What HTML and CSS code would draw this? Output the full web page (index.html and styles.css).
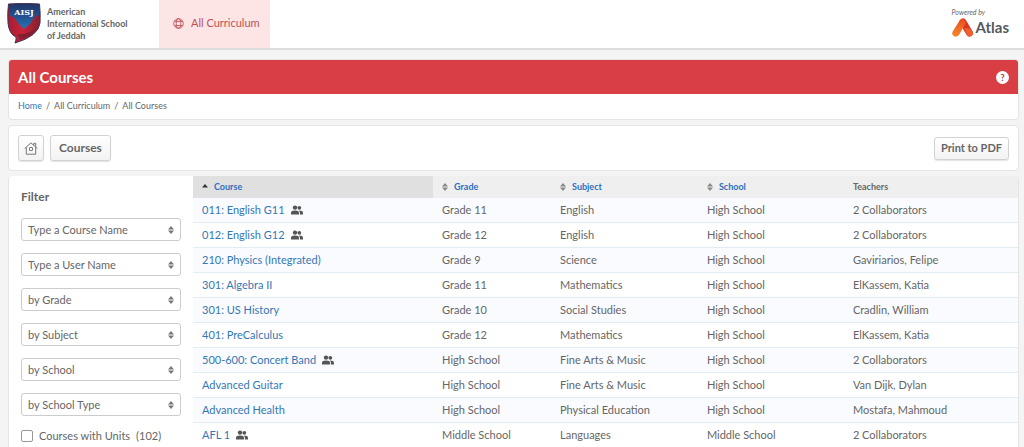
FILE: index.html
```html
<!DOCTYPE html>
<html lang="en">
<head>
<meta charset="utf-8">
<title>All Courses</title>
<meta name="viewport" content="width=device-width, initial-scale=1">
<link rel="stylesheet" href="styles.css">
</head>
<body>
<svg class="sprite" aria-hidden="true">
  <symbol id="people" viewBox="0 0 12 10">
    <circle cx="4" cy="2.6" r="2.2"/><path d="M0 9.600V8q0-2.400 4-2.400T8 8v1.600z"/>
    <circle cx="8.300" cy="2.800" r="1.900"/><path d="M8.900 9.600V8q0-1.300-1-2.400 4.100 0 4.100 2.400v1.600z"/>
  </symbol>
  <symbol id="sort" viewBox="0 0 6 8"><path d="M3 0l3 3.400H0zM3 8l3-3.400H0z"/></symbol>
</svg>
<header class="topbar">
  <div class="brand">
    <svg class="crest" viewBox="0 0 34 41" role="img" aria-label="AISJ">
      <defs>
        <linearGradient id="shield" x1="0" y1="0" x2="1" y2="0"><stop offset="0" stop-color="#a51e35"/><stop offset=".45" stop-color="#c82338"/><stop offset="1" stop-color="#85202f"/></linearGradient>
        <linearGradient id="field" x1="0" y1="0" x2="0" y2="1"><stop offset="0" stop-color="#203664"/><stop offset=".5" stop-color="#24518e"/><stop offset="1" stop-color="#2476b6"/></linearGradient>
      </defs>
      <path d="M1.500 1Q17-.5 32.500 1 33.500 10 33 20 31.500 33 8 40q1.500-3 1-6Q2 31 1 20 .3 10 1.500 1z" fill="url(#shield)" stroke="#3b315a"/>
      <path d="M2 1.500Q17 0 32 1.500v10.500Q26 14 24 20l-7 6-6-6Q8 14 2 12z" fill="url(#field)"/>
      <path d="M12 31q9 1 18-7-4 10-18 13 2-3-2-4z" fill="#851e31"/>
      <text class="crest-text" x="17" y="12" text-anchor="middle">AISJ</text>
    </svg>
    <div class="school">American<br>International School<br>of Jeddah</div>
  </div>
  <nav class="nav">
    <a class="nav-link" href="#">
      <svg class="globe" viewBox="0 0 12 12" aria-hidden="true"><circle cx="6" cy="6" r="5.200"/><ellipse cx="6" cy="6" rx="2.500" ry="5.200"/><path d="M1.500 3.700h9M1.500 8.300h9"/></svg>
      All Curriculum
    </a>
  </nav>
  <div class="powered">
    <span class="powered-label">Powered by</span>
    <span class="atlas">
      <svg class="atlas-mark" viewBox="0 0 22 19" aria-hidden="true">
        <defs><linearGradient id="ember" x1="0" y1="0" x2="0" y2="1"><stop offset="0" stop-color="#e84b20"/><stop offset="1" stop-color="#f78a2c"/></linearGradient></defs>
        <path d="M11 4l6.500 11" fill="none" stroke="#d93820" stroke-width="7" stroke-linecap="round"/>
        <path d="M8 2Q11-.8 13 2.200q1.500 2-.5 5L7 17q-2.500 3-5.500 1Q-.800 16 1 13z" fill="url(#ember)"/>
        <path d="M12.500 10l5 .500 3.300 3.500q.8 4-2.800 4.500-2.500 0-3.500-2.500z" fill="#f0602c"/>
      </svg>
      Atlas
    </span>
  </div>
</header>

<main class="page">
  <section class="card">
    <div class="title-bar">
      <h1 class="title">All Courses</h1>
      <button class="help" type="button" aria-label="Help">?</button>
    </div>
    <nav class="crumbs" aria-label="Breadcrumb"><a class="link" href="#">Home</a><span>/</span><span>All Curriculum</span><span>/</span><span>All Courses</span></nav>
  </section>

  <section class="card toolbar">
    <button class="btn btn-home" type="button" aria-label="Home">
      <svg class="home" viewBox="0 0 14 13" aria-hidden="true"><path d="M.7 6.500L7 .9l6.300 5.600M2.300 5.300v6.900h9.400V5.300M9.800 3.200V1.300h1.900v3.600"/><rect x="5.500" y="5.500" width="3" height="3" rx=".5"/></svg>
    </button>
    <button class="btn btn-large" type="button">Courses</button>
    <button class="btn btn-print" type="button">Print to PDF</button>
  </section>

  <section class="card content">
    <form class="filter">
      <h2 class="filter-title">Filter</h2>
      <div class="field"><select aria-label="Course name"><option>Type a Course Name</option></select><svg class="arrows"><use href="#sort"/></svg></div>
      <div class="field"><select aria-label="User name"><option>Type a User Name</option></select><svg class="arrows"><use href="#sort"/></svg></div>
      <div class="field"><select aria-label="Grade"><option>by Grade</option></select><svg class="arrows"><use href="#sort"/></svg></div>
      <div class="field"><select aria-label="Subject"><option>by Subject</option></select><svg class="arrows"><use href="#sort"/></svg></div>
      <div class="field"><select aria-label="School"><option>by School</option></select><svg class="arrows"><use href="#sort"/></svg></div>
      <div class="field"><select aria-label="School type"><option>by School Type</option></select><svg class="arrows"><use href="#sort"/></svg></div>
      <label class="check"><input type="checkbox"><span>Courses with Units</span><span>(102)</span></label>
    </form>
    <table class="courses">
      <colgroup><col class="c-course"><col class="c-grade"><col class="c-subject"><col class="c-school"><col></colgroup>
      <thead>
        <tr>
          <th class="sorted" aria-sort="ascending"><a href="#"><svg class="sort-icon up" viewBox="0 0 6 8"><path d="M3 1l3 3.500H0z"/></svg>Course</a></th>
          <th><a href="#"><svg class="sort-icon"><use href="#sort"/></svg>Grade</a></th>
          <th><a href="#"><svg class="sort-icon"><use href="#sort"/></svg>Subject</a></th>
          <th><a href="#"><svg class="sort-icon"><use href="#sort"/></svg>School</a></th>
          <th>Teachers</th>
        </tr>
      </thead>
      <tbody>
        <tr><td><a class="link" href="#">011: English G11</a><svg class="people"><use href="#people"/></svg></td><td>Grade 11</td><td>English</td><td>High School</td><td>2 Collaborators</td></tr>
        <tr><td><a class="link" href="#">012: English G12</a><svg class="people"><use href="#people"/></svg></td><td>Grade 12</td><td>English</td><td>High School</td><td>2 Collaborators</td></tr>
        <tr><td><a class="link" href="#">210: Physics (Integrated)</a></td><td>Grade 9</td><td>Science</td><td>High School</td><td>Gaviriarios, Felipe</td></tr>
        <tr><td><a class="link" href="#">301: Algebra II</a></td><td>Grade 11</td><td>Mathematics</td><td>High School</td><td>ElKassem, Katia</td></tr>
        <tr><td><a class="link" href="#">301: US History</a></td><td>Grade 10</td><td>Social Studies</td><td>High School</td><td>Cradlin, William</td></tr>
        <tr><td><a class="link" href="#">401: PreCalculus</a></td><td>Grade 12</td><td>Mathematics</td><td>High School</td><td>ElKassem, Katia</td></tr>
        <tr><td><a class="link" href="#">500-600: Concert Band</a><svg class="people"><use href="#people"/></svg></td><td>High School</td><td>Fine Arts &amp; Music</td><td>High School</td><td>2 Collaborators</td></tr>
        <tr><td><a class="link" href="#">Advanced Guitar</a></td><td>High School</td><td>Fine Arts &amp; Music</td><td>High School</td><td>Van Dijk, Dylan</td></tr>
        <tr><td><a class="link" href="#">Advanced Health</a></td><td>High School</td><td>Physical Education</td><td>High School</td><td>Mostafa, Mahmoud</td></tr>
        <tr><td><a class="link" href="#">AFL 1</a><svg class="people"><use href="#people"/></svg></td><td>Middle School</td><td>Languages</td><td>Middle School</td><td>2 Collaborators</td></tr>
      </tbody>
    </table>
  </section>
</main>
</body>
</html>
```
FILE: styles.css
```css
* { box-sizing: border-box; }
body {
  margin: 0;
  height: 100vh;
  overflow: hidden;
  display: flex;
  flex-direction: column;
  background: #f4f4f4;
  color: #666;
  font: 11px/16px Lato, "Liberation Sans", sans-serif;
}
a { text-decoration: none; }
button, select, input { font: inherit; color: inherit; margin: 0; }
.sprite { position: absolute; width: 0; height: 0; }
.link { color: #3577b5; }

.topbar {
  flex: none;
  display: flex;
  background: #fff;
  border-bottom: 2px solid #dcdcdc;
  height: 50px;
}
.brand { display: flex; width: 159px; padding: 3px 0 0 7px; gap: 6px; }
.crest { flex: none; width: 34px; height: 41px; }
.crest-text { fill: #fff; font: bold 8px "DejaVu Serif", serif; }
.school {
  padding-top: 3px;
  font-size: 9px;
  font-weight: bold;
  line-height: 12px;
  white-space: nowrap;
}
.nav { display: flex; }
.nav-link {
  display: flex;
  align-items: center;
  gap: 7px;
  padding: 0 10px 2px 14px;
  background: #fde4e5;
  color: #bb5358;
}
.globe { width: 11px; height: 11px; fill: none; stroke: #bb5358; stroke-width: 1; }
.powered { margin-left: auto; padding: 7px 15px 0 0; }
.powered-label { display: block; font-size: 7px; font-style: italic; line-height: 10px; }
.atlas {
  display: flex;
  align-items: center;
  gap: 2px;
  font-size: 15px;
  font-weight: bold;
  line-height: 20px;
  color: #555a60;
}
.atlas-mark { width: 22px; height: 19px; }

.page {
  flex: 1;
  min-height: 0;
  display: flex;
  flex-direction: column;
  gap: 5px;
  padding: 9px 5px 0 8px;
}
.card {
  flex: none;
  background: #fff;
  border: 1px solid #e4e4e4;
  border-radius: 4px;
  overflow: hidden;
}
.title-bar {
  display: flex;
  align-items: center;
  justify-content: space-between;
  height: 34px;
  padding: 0 9px;
  background: #d83e43;
}
.title { margin: 0; color: #fff; font-size: 15px; line-height: 20px; }
.help {
  width: 13px;
  height: 13px;
  padding: 0;
  border: 0;
  border-radius: 50%;
  background: #fff;
  color: #a33;
  font-size: 9px;
  font-weight: bold;
  line-height: 13px;
}
.crumbs { display: flex; gap: 4px; padding: 4px 9px 5px; font-size: 9px; }

.toolbar { display: flex; align-items: center; gap: 6px; padding: 9px; }
.btn {
  height: 26px;
  padding: 0 8px;
  border: 1px solid #d2d2d2;
  border-radius: 3px;
  background: linear-gradient(#fff, #f3f3f3);
  box-shadow: 0 1px 1px #e4e4e4;
  font-weight: bold;
}
.btn-home { display: flex; align-items: center; padding: 0 5px; }
.home { width: 14px; height: 13px; fill: none; stroke: #777; stroke-width: 1; }
.btn-large { font-size: 12px; }
.btn-print { height: 23px; padding: 0 6px; margin-left: auto; }

.content { flex: 1; display: flex; min-height: 0; border-width: 0 1px; border-radius: 4px 4px 0 0; }
.filter { flex: none; width: 184px; padding: 11px 12px; }
.filter-title { margin: 0 0 11px; font-size: 12px; line-height: 20px; }
.field { position: relative; margin-bottom: 12px; }
.field select {
  display: block;
  appearance: none;
  width: 100%;
  height: 23px;
  padding: 0 16px 0 6px;
  border: 1px solid #ccc;
  border-radius: 3px;
  background: #fff;
}
.arrows {
  position: absolute;
  right: 7px;
  top: 8px;
  width: 6px;
  height: 8px;
  fill: #777;
  pointer-events: none;
}
.check { display: flex; align-items: center; gap: 6px; }
.check input {
  appearance: none;
  width: 12px;
  height: 12px;
  border: 1px solid #999;
  border-radius: 2px;
  background: #fff;
}

.courses { flex: 1; align-self: flex-start; table-layout: fixed; border-collapse: separate; border-spacing: 0; }
.c-course { width: 29.1%; }
.c-grade { width: 14.3%; }
.c-subject { width: 17.8%; }
.c-school { width: 17.7%; }
.courses th {
  height: 22px;
  padding: 0 9px;
  background: #efefef;
  font-size: 9px;
  text-align: left;
}
.courses th.sorted { background: #e0e0e0; }
.courses th a { display: flex; align-items: center; gap: 6px; color: #2c6fc0; }
.sort-icon { width: 6px; height: 8px; fill: #888; }
.sort-icon.up { fill: #333; }
.courses td {
  height: 25px;
  padding: 0 9px;
  border-bottom: 1px solid #e2edf3;
  white-space: nowrap;
}
.courses tbody tr:nth-child(odd) { background: #f9fbfe; }
.people { width: 12px; height: 10px; margin-left: 6px; vertical-align: -1px; fill: #555; }
```
